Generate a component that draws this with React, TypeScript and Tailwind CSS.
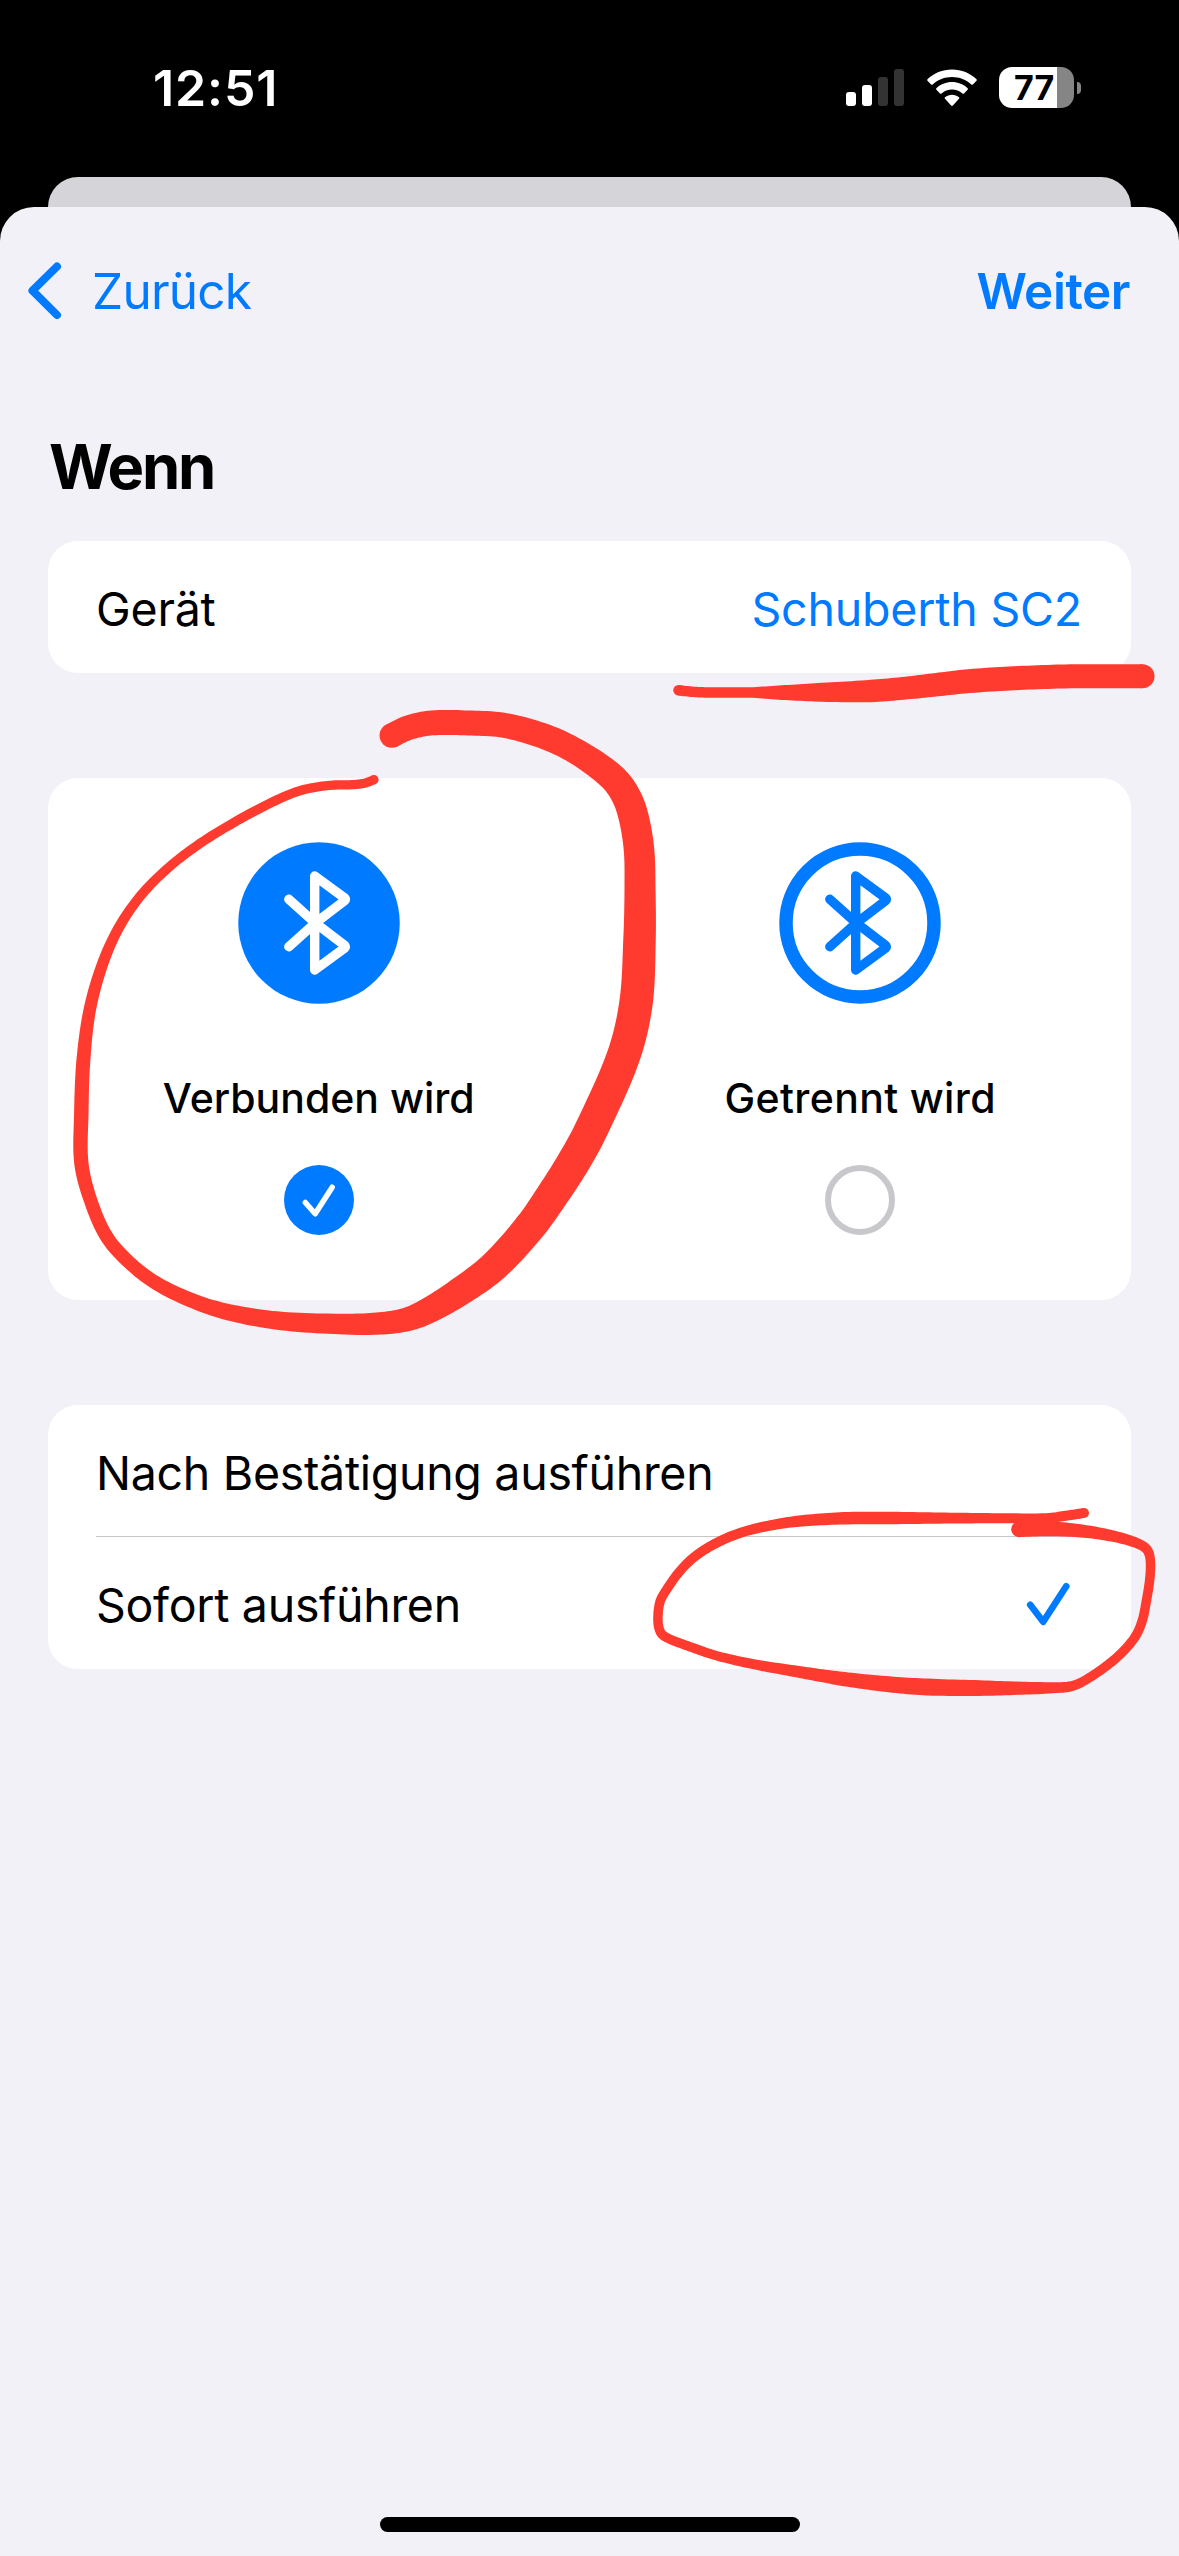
import type { ReactNode } from 'react';

type InkPoint = [x: number, y: number, width: number];

const underline: InkPoint[] = [
  [678.5, 690.3, 10.5], [695, 692, 10.5], [711, 692.5, 10.5], [753, 692.5, 10.5], [785, 692.6, 15], [822, 692.3, 19],
  [871, 691, 22.5], [906.5, 688, 22.8], [940, 684.3, 23.5], [969, 681.1, 24], [1014, 678.3, 24],
  [1062, 676.5, 24], [1100, 676.3, 24], [1142.5, 676.3, 24],
];

const loop: InkPoint[] = [
  [391.8, 735.5, 24.5], [409, 727.5, 24.7], [432, 722.9, 25], [468, 723, 25], [505, 725.5, 25],
  [546, 737, 25.5], [578, 752.5, 26], [608, 773.5, 28], [622, 789, 29], [632, 811, 30],
  [638.8, 847.5, 30.5], [640, 888, 31], [639.5, 940, 32.5], [636, 1003, 33.5], [623.5, 1056, 33.5],
  [592, 1128, 33.5], [574, 1161.3, 33.5], [553.3, 1193.7, 32.8], [530, 1226.7, 32], [494.3, 1266, 30.6],
  [462.3, 1290, 29], [427, 1311.3, 26], [403.3, 1320.3, 23.5], [373.7, 1323.8, 22], [340, 1324, 20.6],
  [281, 1321, 18.5], [232, 1313, 16.5],
  [197, 1302.5, 15], [158.5, 1284.5, 14], [131.5, 1264.5, 13.5], [107.5, 1238, 13.5], [91.5, 1203, 13.5],
  [81.4, 1163.5, 14.3], [81.3, 1113.5, 14.5], [83.3, 1061.5, 14], [89.4, 1011.7, 12.5],
  [101, 968.5, 11.5], [117, 931, 10.5], [138, 899, 9.8], [162.5, 873, 9.5], [193, 848.3, 9.5],
  [230, 824.8, 9.5], [268.5, 804, 9.5], [299, 791, 9.5], [328, 785.5, 9.3], [352, 784.7, 9.3],
  [364.5, 783.2, 9.3], [374, 779.7, 9.3],
];

const oval: InkPoint[] = [
  [1019, 1529.3, 15.7], [1050, 1528.7, 15], [1081.5, 1531, 13], [1110, 1535.5, 11.5],
  [1134, 1542, 10.5], [1146, 1548.5, 10], [1150, 1557.5, 9.5], [1150, 1576.7, 9.5],
  [1146, 1603, 9.5], [1142, 1621.5, 9.5], [1135, 1637, 9.5], [1120, 1654.5, 9.5],
  [1102.5, 1668.8, 9.5], [1085, 1680.3, 9.5], [1073, 1685.8, 10], [1060.5, 1687.5, 10.7],
  [1022, 1688.2, 13], [980, 1688.1, 15.7], [927.5, 1687, 17], [889, 1684.3, 16], [847, 1679.5, 14.3],
  [819, 1675.2, 12.8], [787.5, 1670, 11.3], [756, 1664.7, 10], [717.5, 1656, 9.5],
  [693, 1647.8, 9.5], [668.5, 1638.5, 9.5], [661, 1633, 9.5], [658, 1621.5, 9.5],
  [659.8, 1602.5, 9.5], [666, 1590.5, 9.5], [681, 1569.8, 9.5], [697.5, 1554.5, 9.7], [721, 1540.7, 10],
  [745.5, 1531.3, 10], [777, 1524.2, 10.5], [805, 1520.6, 11.5], [843.5, 1518.3, 12.5],
  [892.5, 1518, 12.5], [945, 1518.1, 11], [997.5, 1518.2, 10], [1046.5, 1518.2, 10],
  [1064, 1516, 10], [1084, 1513, 10],
];

/** Builds a closed outline around a centre line whose width varies from point to point. */
function inkPath(points: InkPoint[]): string {
  const samples: InkPoint[] = [];
  const steps = 10;
  for (let i = 0; i < points.length - 1; i++) {
    const p0 = points[Math.max(i - 1, 0)];
    const p1 = points[i];
    const p2 = points[i + 1];
    const p3 = points[Math.min(i + 2, points.length - 1)];
    const span = Math.hypot(p2[0] - p1[0], p2[1] - p1[1]);
    const before = i === 0 ? span : Math.hypot(p1[0] - p0[0], p1[1] - p0[1]);
    const after = i === points.length - 2 ? span : Math.hypot(p3[0] - p2[0], p3[1] - p2[1]);
    const at = (k: 0 | 1, t: number) => {
      const m1 = ((p2[k] - p0[k]) / (before + span)) * span;
      const m2 = ((p3[k] - p1[k]) / (span + after)) * span;
      const t2 = t * t;
      const t3 = t2 * t;
      return (2 * t3 - 3 * t2 + 1) * p1[k] + (t3 - 2 * t2 + t) * m1 + (3 * t2 - 2 * t3) * p2[k] + (t3 - t2) * m2;
    };
    for (let s = i === 0 ? 0 : 1; s <= steps; s++) {
      const t = s / steps;
      samples.push([at(0, t), at(1, t), p1[2] + (p2[2] - p1[2]) * t]);
    }
  }
  const left: string[] = [];
  const right: string[] = [];
  samples.forEach(([x, y, w], i) => {
    const a = samples[Math.max(i - 1, 0)];
    const b = samples[Math.min(i + 1, samples.length - 1)];
    const len = Math.hypot(b[0] - a[0], b[1] - a[1]) || 1;
    const nx = (-(b[1] - a[1]) / len) * (w / 2);
    const ny = ((b[0] - a[0]) / len) * (w / 2);
    left.push(`${(x + nx).toFixed(2)} ${(y + ny).toFixed(2)}`);
    right.unshift(`${(x - nx).toFixed(2)} ${(y - ny).toFixed(2)}`);
  });
  return `M${left.join('L')}L${right.join('L')}Z`;
}

function Ink({ points }: { points: InkPoint[] }) {
  const first = points[0];
  const last = points[points.length - 1];
  return (
    <g>
      <path d={inkPath(points)} fillRule="nonzero" />
      <circle cx={first[0]} cy={first[1]} r={first[2] / 2} />
      <circle cx={last[0]} cy={last[1]} r={last[2] / 2} />
    </g>
  );
}

function StatusBar() {
  return (
    <header className="flex h-[177px] items-start justify-between pr-[98px] pl-[153px]">
      <span className="mt-[58px] text-[50px] leading-[60px] font-semibold tracking-[0.9px] text-white">12:51</span>
      <div className="mt-[67px] flex h-[41px] items-center">
        <div className="flex h-[37px] items-end gap-[6px]">
          <i className="h-[14px] w-[10px] rounded-[3px] bg-white" />
          <i className="h-[21px] w-[10px] rounded-[3px] bg-white" />
          <i className="h-[29px] w-[10px] rounded-[3px] bg-[#333]" />
          <i className="h-[37px] w-[10px] rounded-[3px] bg-[#333]" />
        </div>
        <svg className="ml-[22px] h-[38px] w-[52px]" viewBox="0 0 52 38" fill="white">
          <path d="M26 0.5C35.5 0.5 44.2 4.2 50.5 10.2Q51.3 11 50.5 11.8L46.9 15.4Q46.1 16.1 45.3 15.4C40.2 10.6 33.4 7.9 26 7.9S11.8 10.6 6.7 15.4Q5.9 16.1 5.1 15.4L1.5 11.8Q0.7 11 1.5 10.2C7.8 4.2 16.5 0.5 26 0.5Z" />
          <path d="M26 13.1C32 13.1 37.5 15.4 41.6 19.2Q42.4 20 41.6 20.8L38 24.4Q37.2 25.1 36.4 24.4C33.6 21.9 30 20.5 26 20.5S18.4 21.9 15.6 24.4Q14.8 25.1 14 24.4L10.4 20.8Q9.6 20 10.4 19.2C14.5 15.4 20 13.1 26 13.1Z" />
          <path d="M26 25.7C28.6 25.7 31 26.6 33 28.2Q33.8 29 33 29.8L26.9 36.5Q26 37.4 25.1 36.5L19 29.800Q18.2 29 19 28.2C21 26.6 23.4 25.7 26 25.7Z" />
        </svg>
        <div className="ml-[21px] flex h-[41px] w-[75px] items-center overflow-hidden rounded-[13px] bg-linear-to-r from-white from-[58px] to-[#858585] to-[58px] pl-[15px]">
          <span className="text-[34px] leading-[41px] font-bold text-black">77</span>
        </div>
        <i className="ml-[3px] h-[12px] w-[4px] rounded-r-full bg-[#858585]" />
      </div>
    </header>
  );
}

function Card({ children, className }: { children: ReactNode; className: string }) {
  return <section className={`mx-[48px] rounded-[30px] bg-white ${className}`}>{children}</section>;
}

function BluetoothBadge({ filled }: { filled?: boolean }) {
  return (
    <svg className="size-[162px]" viewBox="-81 -81 162 162" fill="none">
      {filled ? (
        <circle r="80.75" fill="#007aff" />
      ) : (
        <circle r="74" stroke="#007aff" strokeWidth="13.5" />
      )}
      <path
        d="M-30.200 -23.700L-4 -0.200L25.800 22.500Q27 23.700 25.800 24.900L-4.300 47V-47L25.800 -24.900Q27 -23.700 25.800 -22.500L-4 0.200L-30.200 23.700"
        stroke={filled ? 'white' : '#007aff'}
        strokeWidth="9.400"
        strokeLinecap="round"
        strokeLinejoin="round"
      />
    </svg>
  );
}

function Choice({ label, selected, labelClass }: { label: string; selected?: boolean; labelClass: string }) {
  return (
    <div className="flex flex-1 flex-col items-center pt-[64px]">
      <BluetoothBadge filled={selected} />
      <span className={`mt-[69px] text-[41px] leading-[50px] font-medium whitespace-nowrap ${labelClass}`}>{label}</span>
      {selected ? (
        <span className="mt-[42px] flex size-[70px] items-center justify-center rounded-full bg-[#007aff]">
          <svg className="size-[70px]" viewBox="0 0 70 70" fill="none" stroke="white" strokeWidth="5.5" strokeLinecap="round" strokeLinejoin="round">
            <path d="M21.3 37.5L31.2 48.8L48.2 22.2" />
          </svg>
        </span>
      ) : (
        <span className="mt-[42px] size-[70px] rounded-full border-[6px] border-[#c7c7cc]" />
      )}
    </div>
  );
}

export default function App() {
  return (
    <div className="relative flex h-[2556px] w-[1179px] flex-col overflow-hidden bg-black font-['Inter',sans-serif] text-black">
      <StatusBar />
      <div className="mx-[48px] h-[30px] rounded-t-[30px] bg-[#d5d4d9]" />
      <main className="flex flex-1 flex-col rounded-t-[34px] bg-[#f2f1f7]">
        <nav className="flex h-[168px] items-center justify-between pr-[49px] pl-[26px] text-[49.5px] leading-[60px] text-[#007aff]">
          <a className="flex items-center tracking-[-0.75px]">
            <svg className="h-[60px] w-[38px]" viewBox="0 0 38 60" fill="none" stroke="currentColor" strokeWidth="8" strokeLinecap="round" strokeLinejoin="round">
              <path d="M31 5.5L6.5 29.7L31 54" />
            </svg>
            <span className="ml-[28px]">Zurück</span>
          </a>
          <a className="font-semibold tracking-[-0.45px]">Weiter</a>
        </nav>
        <h1 className="mt-[54px] ml-[49px] text-[61.5px] leading-[76px] font-bold tracking-[-2.2px]">Wenn</h1>
        <Card className="mt-[36px] flex h-[132px] items-center justify-between pt-[3px] pr-[49px] pl-[48px] text-[46.5px] leading-[60px]">
          <span className="tracking-[-0.2px]">Gerät</span>
          <span className="tracking-[-0.2px] text-[#007aff]">Schuberth SC2</span>
        </Card>
        <Card className="mt-[105px] flex h-[522px]">
          <Choice label="Verbunden wird" selected labelClass="tracking-normal" />
          <Choice label="Getrennt wird" labelClass="tracking-[0.35px]" />
        </Card>
        <Card className="mt-[105px] h-[264px] pl-[48px] text-[46.5px] leading-[60px]">
          <div className="flex h-[132px] items-center border-b border-[#c6c6c8] pt-[5px] tracking-[-0.3px]">
            <span>Nach Bestätigung ausführen</span>
          </div>
          <div className="flex h-[132px] items-center justify-between pt-[3px] pr-[60px] tracking-[-0.3px]">
            <span>Sofort ausführen</span>
            <svg className="h-[46px] w-[46px]" viewBox="0 0 46 46" fill="none" stroke="#007aff" strokeWidth="6.7" strokeLinecap="round" strokeLinejoin="round">
              <path d="M5.2 22.8L18.2 39.8L41.2 4.2" />
            </svg>
          </div>
        </Card>
        <div className="mx-auto mt-auto mb-[24px] h-[15px] w-[420px] rounded-full bg-black" />
      </main>
      <svg className="pointer-events-none absolute inset-0 h-[2556px] w-[1179px]" viewBox="0 0 1179 2556" fill="#ff3b30">
        <Ink points={underline} />
        <Ink points={loop} />
        <Ink points={oval} />
      </svg>
    </div>
  );
}
